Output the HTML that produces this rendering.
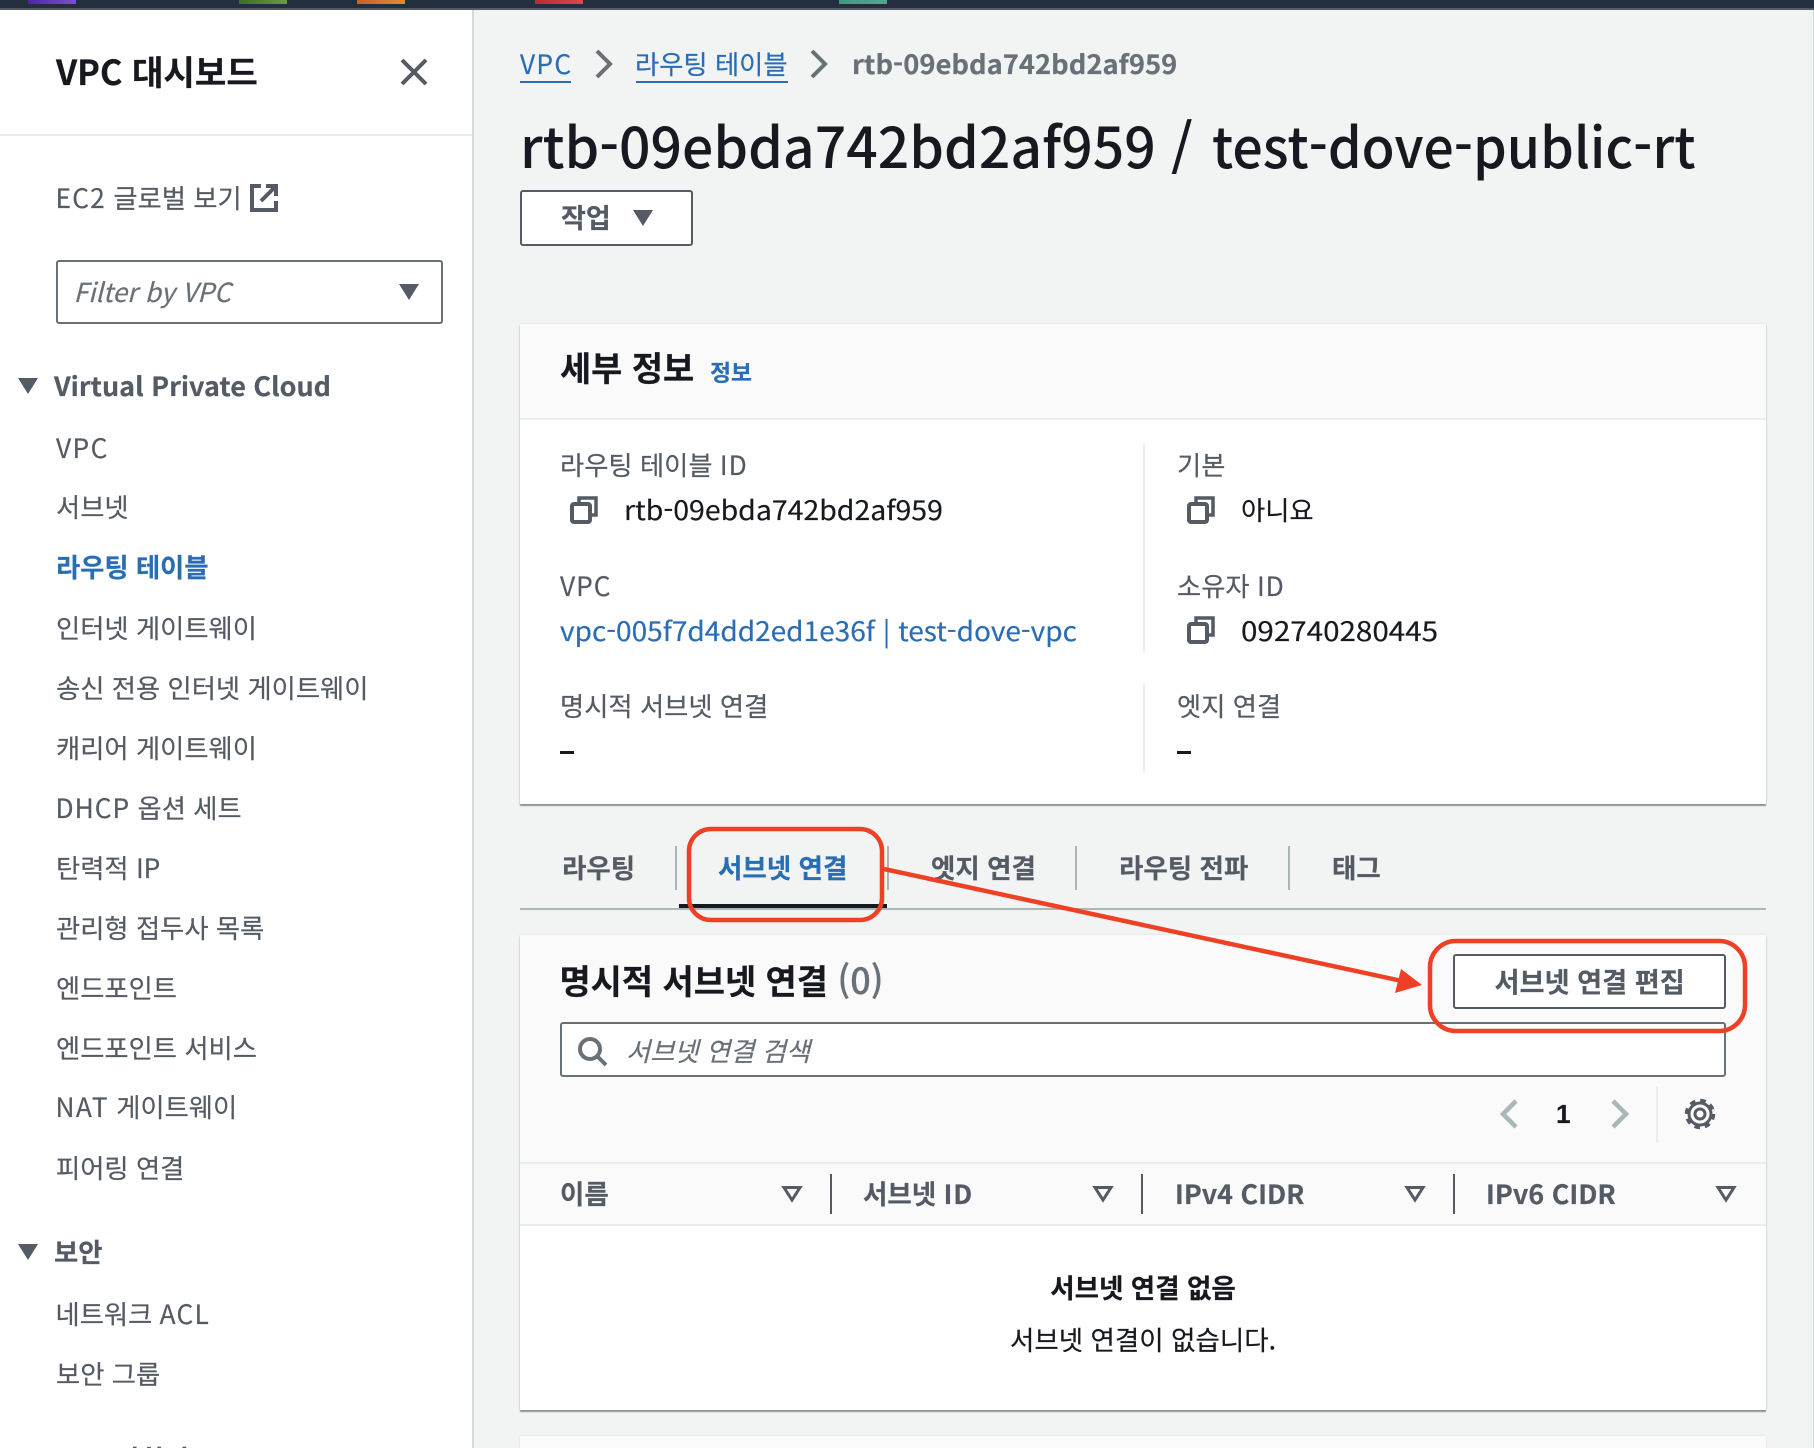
<!DOCTYPE html>
<html lang="ko">
<head>
<meta charset="utf-8">
<title>VPC</title>
<style>
html,body{margin:0;padding:0;width:1814px;height:1448px;overflow:hidden;background:#f2f3f3;}
body{position:relative;font-family:"Noto Sans CJK KR","Liberation Sans",sans-serif;font-size:26.3px;color:#16191f;}
.t{position:absolute;white-space:nowrap;line-height:40px;height:40px;margin-top:-20px;transform-origin:left center;-webkit-text-stroke:.2px;}
.b{position:absolute;box-sizing:border-box;}
.n{left:56px;color:#545b64;}
.s{font-weight:700;color:#545b64;left:54px;}
.lab{color:#545b64;}
.blue{color:#2a6db5;}
.tab{font-weight:700;color:#545b64;font-size:26.5px;}
.th{font-weight:700;color:#545b64;font-size:26.5px;}
.v{font-weight:500;-webkit-text-stroke:0;}
svg{position:absolute;overflow:visible;}
</style>
</head>
<body>
<!-- top bar -->
<div class="b" style="left:0;top:0;width:1814px;height:8px;background:#232f3e"></div>
<div class="b" style="left:0;top:8px;width:1814px;height:2px;background:#545b64"></div>
<div class="b" style="left:28px;top:0;width:48px;height:4px;background:linear-gradient(90deg,#4d27a8,#7b4fd0)"></div>
<div class="b" style="left:239px;top:0;width:48px;height:4px;background:linear-gradient(90deg,#3c7023,#6a9a3f)"></div>
<div class="b" style="left:357px;top:0;width:48px;height:4px;background:linear-gradient(90deg,#c8622c,#e08a34)"></div>
<div class="b" style="left:535px;top:0;width:48px;height:4px;background:linear-gradient(90deg,#b52d2d,#d94a4a)"></div>
<div class="b" style="left:839px;top:0;width:48px;height:4px;background:linear-gradient(90deg,#3f9a82,#4fa98f)"></div>

<!-- sidebar -->
<div class="b" style="left:0;top:10px;width:474px;height:1438px;background:#fff;border-right:2px solid #d5dbdb"></div>
<div class="b" style="left:0;top:134px;width:472px;height:2px;background:#eaeded"></div>
<div class="t" style="left:56px;top:70px;font-size:34.2px;font-weight:700">VPC 대시보드</div>
<svg style="left:401px;top:59px" width="26" height="26" viewBox="0 0 26 26"><path d="M1 1L25 25M25 1L1 25" stroke="#545b64" stroke-width="4" fill="none"/></svg>
<div class="t n" style="top:197px;left:55.5px"><span style="letter-spacing:1.2px">EC2</span> 글로벌 보기</div>
<svg style="left:250px;top:184px" width="28" height="28" viewBox="0 0 28 28"><path d="M11 2H2V26H26V17" stroke="#545b64" stroke-width="4" fill="none"/><path d="M11 17L25 3M16 2H26V12" stroke="#545b64" stroke-width="4" fill="none"/></svg>
<div class="b" style="left:56px;top:260px;width:387px;height:64px;border:2px solid #687078;border-radius:3px;background:#fff"></div>
<div class="t" style="left:73.5px;top:291px;color:#687078;font-style:italic;letter-spacing:.05px">Filter by VPC</div>
<svg style="left:399px;top:284px" width="20" height="16"><path d="M0 0H20L10 16Z" fill="#545b64"/></svg>
<svg style="left:18px;top:378px" width="20" height="16"><path d="M0 0H20L10 16Z" fill="#545b64"/></svg>
<div class="t s" style="top:385px;transform:scaleX(1.025)">Virtual Private Cloud</div>
<div class="t n" style="top:447px;letter-spacing:1.4px">VPC</div>
<div class="t n" style="top:506px">서브넷</div>
<div class="t n" style="top:566px;font-weight:700;color:#2a6db5">라우팅 테이블</div>
<div class="t n" style="top:627px">인터넷 게이트웨이</div>
<div class="t n" style="top:687px">송신 전용 인터넷 게이트웨이</div>
<div class="t n" style="top:747px">캐리어 게이트웨이</div>
<div class="t n" style="top:807px;left:55.5px"><span style="letter-spacing:1px">DHCP</span> 옵션 세트</div>
<div class="t n" style="top:867px">탄력적 IP</div>
<div class="t n" style="top:927px">관리형 접두사 목록</div>
<div class="t n" style="top:987px">엔드포인트</div>
<div class="t n" style="top:1047px">엔드포인트 서비스</div>
<div class="t n" style="top:1106px;left:55.5px"><span style="letter-spacing:1.4px">NAT</span> 게이트웨이</div>
<div class="t n" style="top:1167px">피어링 연결</div>
<svg style="left:18px;top:1244px" width="20" height="16"><path d="M0 0H20L10 16Z" fill="#545b64"/></svg>
<div class="t s" style="top:1251px">보안</div>
<div class="t n" style="top:1313px;left:55.5px">네트워크 <span style="letter-spacing:1.2px">ACL</span></div>
<div class="t n" style="top:1373px">보안 그룹</div>
<div class="t s" style="top:1458px">DNS 방화벽</div>

<!-- breadcrumbs -->
<div class="t blue" style="left:520px;top:63px;letter-spacing:1.3px">VPC</div>
<div class="b" style="left:520px;top:81px;width:51px;height:2px;background:#2a6db5"></div>
<svg style="left:595px;top:49px" width="18" height="30"><path d="M2 2L15 15L2 28" stroke="#687078" stroke-width="4" fill="none"/></svg>
<div class="t blue" style="left:635px;top:63px">라우팅 테이블</div>
<div class="b" style="left:636px;top:81px;width:152px;height:2px;background:#2a6db5"></div>
<svg style="left:810px;top:49px" width="18" height="30"><path d="M2 2L15 15L2 28" stroke="#687078" stroke-width="4" fill="none"/></svg>
<div class="t" style="left:852px;top:63px;color:#687078;font-weight:700;transform:scaleX(1.04)">rtb-09ebda742bd2af959</div>

<!-- title -->
<div class="t v" style="left:520px;top:147px;font-size:56px;line-height:70px;height:70px;margin-top:-37px;transform:scaleX(.987)">rtb-09ebda742bd2af959</div>
<div class="t v" style="left:1171px;top:147px;font-size:56px;line-height:70px;height:70px;margin-top:-37px">/</div>
<div class="t v" style="left:1212px;top:147px;font-size:56px;line-height:70px;height:70px;margin-top:-37px;transform:scaleX(.959)">test-dove-public-rt</div>
<div class="b" style="left:520px;top:190px;width:173px;height:56px;background:#fff;border:2px solid #545b64;border-radius:3px"></div>
<div class="t" style="left:561px;top:217px;font-weight:700;color:#545b64;font-size:27px">작업</div>
<svg style="left:633px;top:210px" width="20" height="16"><path d="M0 0H20L10 16Z" fill="#545b64"/></svg>

<!-- details panel -->
<div class="b" style="left:520px;top:324px;width:1246px;height:480px;background:#fff;box-shadow:0 2px 1px #879596,0 0 2px #d5dbdb"></div>
<div class="b" style="left:520px;top:324px;width:1246px;height:96px;background:#fafafa;border-bottom:2px solid #eaeded"></div>
<div class="t" style="left:560px;top:367px;font-size:33.9px;font-weight:700">세부 정보</div>
<div class="t blue" style="left:710px;top:372px;font-size:22.8px;font-weight:700">정보</div>
<div class="b" style="left:1143px;top:444px;width:2px;height:208px;background:#eaeded"></div>
<div class="b" style="left:1143px;top:684px;width:2px;height:88px;background:#eaeded"></div>

<div class="t lab" style="left:560px;top:464px">라우팅 테이블 <span style="letter-spacing:1px">ID</span></div>
<svg style="left:570px;top:496px" width="28" height="28" viewBox="0 0 28 28"><rect x="2" y="8" width="18" height="18" rx="2" fill="none" stroke="#545b64" stroke-width="4"/><path d="M9 7V2H26V19H21" fill="none" stroke="#545b64" stroke-width="3.5"/></svg>
<div class="t" style="left:624px;top:509px;transform:scaleX(1.082)">rtb-09ebda742bd2af959</div>
<div class="t lab" style="left:560px;top:585px;letter-spacing:1px">VPC</div>
<div class="t blue" style="left:560px;top:630px;transform:scaleX(1.066)">vpc-005f7d4dd2ed1e36f | test-dove-vpc</div>
<div class="t lab" style="left:560px;top:705px">명시적 서브넷 연결</div>
<div class="b" style="left:560px;top:751px;width:14px;height:3px;background:#16191f"></div>

<div class="t lab" style="left:1177px;top:464px">기본</div>
<svg style="left:1187px;top:496px" width="28" height="28" viewBox="0 0 28 28"><rect x="2" y="8" width="18" height="18" rx="2" fill="none" stroke="#545b64" stroke-width="4"/><path d="M9 7V2H26V19H21" fill="none" stroke="#545b64" stroke-width="3.5"/></svg>
<div class="t" style="left:1241px;top:509px">아니요</div>
<div class="t lab" style="left:1177px;top:585px">소유자 <span style="letter-spacing:1px">ID</span></div>
<svg style="left:1187px;top:616px" width="28" height="28" viewBox="0 0 28 28"><rect x="2" y="8" width="18" height="18" rx="2" fill="none" stroke="#545b64" stroke-width="4"/><path d="M9 7V2H26V19H21" fill="none" stroke="#545b64" stroke-width="3.5"/></svg>
<div class="t" style="left:1241px;top:630px;transform:scaleX(1.125)">092740280445</div>
<div class="t lab" style="left:1177px;top:705px">엣지 연결</div>
<div class="b" style="left:1177px;top:751px;width:14px;height:3px;background:#16191f"></div>

<!-- tabs -->
<div class="b" style="left:520px;top:908px;width:1246px;height:2px;background:#aab7b8"></div>
<div class="t tab" style="left:562px;top:867px">라우팅</div>
<div class="b" style="left:675px;top:846px;width:2px;height:44px;background:#aab7b8"></div>
<div class="t tab" style="left:718px;top:867px;color:#2a6db5">서브넷 연결</div>
<div class="b" style="left:679px;top:904px;width:208px;height:4px;background:#16191f"></div>
<div class="b" style="left:887px;top:846px;width:2px;height:44px;background:#aab7b8"></div>
<div class="t tab" style="left:931px;top:867px">엣지 연결</div>
<div class="b" style="left:1075px;top:846px;width:2px;height:44px;background:#aab7b8"></div>
<div class="t tab" style="left:1119px;top:867px">라우팅 전파</div>
<div class="b" style="left:1288px;top:846px;width:2px;height:44px;background:#aab7b8"></div>
<div class="t tab" style="left:1332px;top:867px">태그</div>

<!-- subnet panel -->
<div class="b" style="left:520px;top:935px;width:1246px;height:475px;background:#fff;box-shadow:0 2px 1px #879596,0 0 2px #d5dbdb"></div>
<div class="b" style="left:520px;top:935px;width:1246px;height:291px;background:#fafafa;border-bottom:2px solid #eaeded"></div>
<div class="b" style="left:520px;top:1162px;width:1246px;height:2px;background:#eaeded"></div>
<div class="t" style="left:559.5px;top:979px;font-size:33.9px;font-weight:700">명시적 서브넷 연결 <span style="font-weight:500;font-size:36px;color:#687078">(0)</span></div>
<div class="b" style="left:1453px;top:954px;width:273px;height:55px;background:#fff;border:2px solid #545b64;border-radius:3px"></div>
<div class="t" style="left:1494.5px;top:980px;font-weight:700;color:#545b64;font-size:27.2px">서브넷 연결 편집</div>
<div class="b" style="left:560px;top:1022px;width:1166px;height:55px;background:#fff;border:2px solid #687078;border-radius:3px"></div>
<svg style="left:578px;top:1037px" width="30" height="29" viewBox="0 0 30 29"><circle cx="12" cy="12" r="10" fill="none" stroke="#687078" stroke-width="4"/><path d="M19 19L28 28" stroke="#687078" stroke-width="4" fill="none"/></svg>
<div class="t" style="left:626px;top:1050px;color:#687078;font-style:italic">서브넷 연결 검색</div>

<svg style="left:1499px;top:1099px" width="20" height="30"><path d="M17 2L4 15L17 28" stroke="#aab7b8" stroke-width="4.5" fill="none"/></svg>
<div class="t" style="left:1556px;top:1114px;font-weight:700;font-family:'Liberation Sans',sans-serif">1</div>
<svg style="left:1610px;top:1099px" width="20" height="30"><path d="M3 2L16 15L3 28" stroke="#aab7b8" stroke-width="4.5" fill="none"/></svg>
<div class="b" style="left:1656px;top:1086px;width:2px;height:56px;background:#eaeded"></div>
<svg style="left:1684px;top:1098px" width="32" height="32" viewBox="0 0 32 32"><circle cx="16" cy="16" r="11" fill="none" stroke="#545b64" stroke-width="3"/><circle cx="16" cy="16" r="13.5" fill="none" stroke="#545b64" stroke-width="3.5" stroke-dasharray="5.6 5"/><circle cx="16" cy="16" r="5" fill="none" stroke="#545b64" stroke-width="3"/></svg>

<!-- table header -->
<div class="t th" style="left:560px;top:1193px">이름</div>
<div class="t th" style="left:863px;top:1193px"><span>서브넷</span> <span style="letter-spacing:1px">ID</span></div>
<div class="t th" style="left:1175px;top:1193px;transform:scaleX(1.012)">IPv4 CIDR</div>
<div class="t th" style="left:1486px;top:1193px;transform:scaleX(1.015)">IPv6 CIDR</div>
<div class="b" style="left:830px;top:1174px;width:2px;height:40px;background:#545b64"></div>
<div class="b" style="left:1141px;top:1174px;width:2px;height:40px;background:#545b64"></div>
<div class="b" style="left:1453px;top:1174px;width:2px;height:40px;background:#545b64"></div>
<svg style="left:782px;top:1186px" width="20" height="16" viewBox="0 0 20 16"><path d="M2 1.5H18L10 14Z" fill="none" stroke="#545b64" stroke-width="3"/></svg>
<svg style="left:1093px;top:1186px" width="20" height="16" viewBox="0 0 20 16"><path d="M2 1.5H18L10 14Z" fill="none" stroke="#545b64" stroke-width="3"/></svg>
<svg style="left:1405px;top:1186px" width="20" height="16" viewBox="0 0 20 16"><path d="M2 1.5H18L10 14Z" fill="none" stroke="#545b64" stroke-width="3"/></svg>
<svg style="left:1716px;top:1186px" width="20" height="16" viewBox="0 0 20 16"><path d="M2 1.5H18L10 14Z" fill="none" stroke="#545b64" stroke-width="3"/></svg>

<div class="t" style="left:520px;width:1246px;text-align:center;top:1287px;font-weight:700;font-size:26.5px">서브넷 연결 없음</div>
<div class="t" style="left:520px;width:1246px;text-align:center;top:1339px;font-size:26.5px">서브넷 연결이 없습니다.</div>

<!-- next panel -->
<div class="b" style="left:520px;top:1436px;width:1246px;height:20px;background:#fafafa;box-shadow:0 0 2px #d5dbdb"></div>
<div class="b" style="left:1813px;top:10px;width:1px;height:1438px;background:#d5dbdb"></div>

<!-- annotations -->
<svg style="left:0;top:0" width="1814" height="1448" viewBox="0 0 1814 1448">
<rect x="689" y="829" width="193" height="91" rx="22" fill="none" stroke="#ee4024" stroke-width="4.5"/>
<rect x="1430" y="941" width="315" height="90" rx="26" fill="none" stroke="#ee4024" stroke-width="4.5"/>
<path d="M884 869L1402 981" stroke="#ee4024" stroke-width="4.5" fill="none"/>
<path d="M1422 985L1401 969L1395 993Z" fill="#ee4024"/>
</svg>
</body>
</html>
